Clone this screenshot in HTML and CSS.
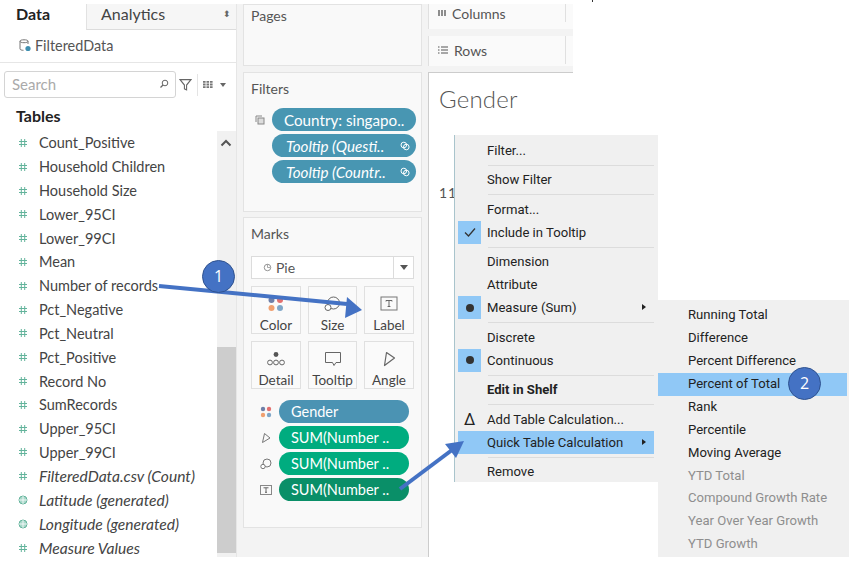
FILE: index.html
```html
<!DOCTYPE html>
<html lang="en">
<head>
<meta charset="utf-8">
<title>Tableau worksheet</title>
<link rel="stylesheet" href="styles.css">
</head>
<body>
<svg class="defs" width="0" height="0" aria-hidden="true">
  <symbol id="hash" viewBox="0 0 10 10"><path d="M3.3 1v8M6.7 1v8M1 3.5h8M1 6.5h8" fill="none" stroke="#62b39b" stroke-width="1"/></symbol>
  <symbol id="globe" viewBox="0 0 10 10"><circle cx="5" cy="5" r="4" fill="#a9d8ca" stroke="#62b39b"/><path d="M5 1v8M1 5h8" stroke="#fff" stroke-width=".8"/></symbol>
  <symbol id="link" viewBox="0 0 10 10"><circle cx="3.8" cy="4" r="2.8" fill="none" stroke="#fff"/><circle cx="6.3" cy="6" r="2.8" fill="none" stroke="#fff"/></symbol>
</svg>
<div class="app">
  <aside class="data">
    <div class="tabs">
      <div class="tab-on">Data</div>
      <div class="tab-off"><span>Analytics</span><span class="updown">⬍</span></div>
    </div>
    <div class="source">
      <svg class="src-icon" viewBox="0 0 12 13"><path d="M9 2.2C9 1.2 7.3.8 5 .8S1 1.2 1 2.2v7.6c0 1 1.6 1.5 3.5 1.5M1 2.2c0 1 1.7 1.5 4 1.5s4-.5 4-1.5V5" fill="none" stroke="#777"/><circle cx="9" cy="9.5" r="2.6" fill="#3f8fb0"/></svg>
      <span>FilteredData</span>
    </div>
    <div class="search-row">
      <div class="search"><span>Search</span><svg viewBox="0 0 10 10"><circle cx="6" cy="4" r="2.8" fill="none" stroke="#666"/><path d="M4 6 1.5 8.5" stroke="#666" stroke-width="1.2"/></svg></div>
      <svg class="funnel" viewBox="0 0 12 12"><path d="M1 1.5h10L7 6.5V11L5 10V6.5z" fill="none" stroke="#666"/></svg>
      <span class="vbar"></span>
      <svg class="grid-ic" viewBox="0 0 10 7"><path d="M0 0h2.6v1.8H0zM3.5 0h2.6v1.8H3.5zM7 0h2.6v1.8H7zM0 2.6h2.6v1.8H0zM3.5 2.6h2.6v1.8H3.5zM7 2.6h2.6v1.8H7zM0 5.2h2.6V7H0zM3.5 5.2h2.6V7H3.5zM7 5.2h2.6V7H7z" fill="#777"/></svg>
      <span class="caret"></span>
    </div>
    <h2 class="tables">Tables</h2>
    <div class="list-wrap">
      <ul class="fields">
        <li><svg class="fi"><use href="#hash"/></svg>Count_Positive</li>
        <li><svg class="fi"><use href="#hash"/></svg>Household Children</li>
        <li><svg class="fi"><use href="#hash"/></svg>Household Size</li>
        <li><svg class="fi"><use href="#hash"/></svg>Lower_95CI</li>
        <li><svg class="fi"><use href="#hash"/></svg>Lower_99CI</li>
        <li><svg class="fi"><use href="#hash"/></svg>Mean</li>
        <li><svg class="fi"><use href="#hash"/></svg>Number of records</li>
        <li><svg class="fi"><use href="#hash"/></svg>Pct_Negative</li>
        <li><svg class="fi"><use href="#hash"/></svg>Pct_Neutral</li>
        <li><svg class="fi"><use href="#hash"/></svg>Pct_Positive</li>
        <li><svg class="fi"><use href="#hash"/></svg>Record No</li>
        <li><svg class="fi"><use href="#hash"/></svg>SumRecords</li>
        <li><svg class="fi"><use href="#hash"/></svg>Upper_95CI</li>
        <li><svg class="fi"><use href="#hash"/></svg>Upper_99CI</li>
        <li class="gen"><svg class="fi"><use href="#hash"/></svg>FilteredData.csv (Count)</li>
        <li class="gen"><svg class="fi"><use href="#globe"/></svg>Latitude (generated)</li>
        <li class="gen"><svg class="fi"><use href="#globe"/></svg>Longitude (generated)</li>
        <li class="gen"><svg class="fi"><use href="#hash"/></svg>Measure Values</li>
      </ul>
      <div class="scroll">
        <svg class="sc-up" viewBox="0 0 12 8"><path d="M1.5 6.5 6 2l4.5 4.5" fill="none" stroke="#555" stroke-width="2"/></svg>
        <div class="thumb"></div>
      </div>
    </div>
  </aside>

  <section class="middle">
    <div class="panel pages"><h3>Pages</h3></div>
    <div class="panel filters">
      <h3>Filters</h3>
      <div class="filter-list">
        <div class="pill-row">
          <svg class="copy" viewBox="0 0 10 10"><path d="M1 7V1h6" fill="none" stroke="#888"/><rect x="3" y="3" width="6" height="6" fill="#ddd" stroke="#888"/></svg>
          <div class="pill blue">Country: singapo..</div>
        </div>
        <div class="pill-row"><div class="pill blue it"><span>Tooltip (Questi..</span><svg class="lk"><use href="#link"/></svg></div></div>
        <div class="pill-row"><div class="pill blue it"><span>Tooltip (Countr..</span><svg class="lk"><use href="#link"/></svg></div></div>
      </div>
    </div>
    <div class="panel marks">
      <h3>Marks</h3>
      <div class="mark-type">
        <div class="mt-main">
          <svg viewBox="0 0 10 10"><circle cx="5" cy="5" r="3.6" fill="none" stroke="#888"/><path d="M5 5V1.5M5 5h3" stroke="#888" stroke-width=".8"/></svg>
          <span>Pie</span>
        </div>
        <div class="mt-drop"><span class="caret dark"></span></div>
      </div>
      <div class="cards">
        <div class="card">
          <svg viewBox="0 0 18 16"><circle cx="4.5" cy="4" r="3" fill="#6f7fa8"/><circle cx="13" cy="4" r="3" fill="#e3706f"/><circle cx="4.5" cy="12" r="3" fill="#f0a070"/><circle cx="13" cy="12" r="3" fill="#7fa6c8"/></svg>
          <span>Color</span>
        </div>
        <div class="card">
          <svg viewBox="0 0 18 16"><circle cx="9.5" cy="7" r="6" fill="none" stroke="#666"/><circle cx="4" cy="11.5" r="3" fill="#fff" stroke="#666"/></svg>
          <span>Size</span>
        </div>
        <div class="card">
          <svg viewBox="0 0 18 16"><rect x="1" y="1" width="16" height="13" fill="none" stroke="#777"/><path d="M6 4.5h6M9 4.5v6M7.6 10.5h2.8M6 4.5v1M12 4.5v1" stroke="#666" fill="none"/></svg>
          <span>Label</span>
        </div>
        <div class="card">
          <svg viewBox="0 0 18 16"><circle cx="9" cy="3.5" r="2.4" fill="#555"/><circle cx="3" cy="11.5" r="2.4" fill="none" stroke="#666"/><circle cx="9" cy="11.5" r="2.4" fill="none" stroke="#666"/><circle cx="15" cy="11.5" r="2.4" fill="none" stroke="#666"/></svg>
          <span>Detail</span>
        </div>
        <div class="card">
          <svg viewBox="0 0 18 16"><path d="M1.5 1.5h15v10h-4.500l-2 3-1.500-3h-7z" fill="none" stroke="#666"/></svg>
          <span>Tooltip</span>
        </div>
        <div class="card">
          <svg viewBox="0 0 18 16"><path d="M6.500 1.500 14.500 7 4.500 14.500z" fill="none" stroke="#666" stroke-width="1.200" stroke-linejoin="round"/></svg>
          <span>Angle</span>
        </div>
      </div>
      <div class="mark-pills">
        <div class="mp">
          <svg viewBox="0 0 12 12"><circle cx="3" cy="3" r="2.200" fill="#6f7fa8"/><circle cx="9" cy="3" r="2.200" fill="#e3706f"/><circle cx="3" cy="9" r="2.200" fill="#f0a070"/><circle cx="9" cy="9" r="2.200" fill="#7fa6c8"/></svg>
          <div class="pill steel">Gender</div>
        </div>
        <div class="mp">
          <svg viewBox="0 0 12 12"><path d="M4.500 1.500 10 6 2.500 10.500z" fill="none" stroke="#777"/></svg>
          <div class="pill green">SUM(Number ..</div>
        </div>
        <div class="mp">
          <svg viewBox="0 0 12 12"><circle cx="7" cy="5" r="4" fill="none" stroke="#777"/><circle cx="3" cy="8.500" r="2.200" fill="#fff" stroke="#777"/></svg>
          <div class="pill green">SUM(Number ..</div>
        </div>
        <div class="mp">
          <svg viewBox="0 0 12 12"><rect x=".5" y="1.500" width="11" height="9" fill="none" stroke="#888"/><path d="M3.500 3.800h5M6 3.800v4.500M5 8.300h2" stroke="#666" fill="none"/></svg>
          <div class="pill green-dark">SUM(Number ..</div>
        </div>
      </div>
    </div>
  </section>

  <section class="work">
    <div class="shelf columns-shelf">
      <svg viewBox="0 0 8 8"><path d="M1 1v6M4 1v6M7 1v6" stroke="#555" stroke-width="1.300"/></svg>
      <span class="shelf-name">Columns</span>
    </div>
    <div class="shelf rows-shelf">
      <svg viewBox="0 0 10 8"><path d="M0 1h1.500M3 1h7M0 4h1.500M3 4h7M0 7h1.500M3 7h7" stroke="#555"/></svg>
      <span class="shelf-name">Rows</span>
    </div>
    <div class="view">
      <h1>Gender</h1>
      <div class="axis">11</div>
    </div>
  </section>
</div>

<div class="tick"></div>

<div class="menu main-menu">
  <div class="mi">Filter...</div>
  <div class="sep"></div>
  <div class="mi">Show Filter</div>
  <div class="sep"></div>
  <div class="mi">Format...</div>
  <div class="mi"><span class="mk"><svg viewBox="0 0 12 10"><path d="M1 5.500 4.500 9 11 1.500" fill="none" stroke="#333" stroke-width="1.300"/></svg></span>Include in Tooltip</div>
  <div class="sep"></div>
  <div class="mi">Dimension</div>
  <div class="mi">Attribute</div>
  <div class="mi"><span class="mk"><i class="dot"></i></span>Measure (Sum)<span class="arr"></span></div>
  <div class="sep"></div>
  <div class="mi">Discrete</div>
  <div class="mi"><span class="mk"><i class="dot"></i></span>Continuous</div>
  <div class="sep"></div>
  <div class="mi bold">Edit in Shelf</div>
  <div class="sep"></div>
  <div class="mi"><span class="delta">Δ</span>Add Table Calculation...</div>
  <div class="mi hot">Quick Table Calculation<span class="arr"></span></div>
  <div class="sep"></div>
  <div class="mi">Remove</div>
</div>

<div class="menu sub-menu">
  <div class="si">Running Total</div>
  <div class="si">Difference</div>
  <div class="si">Percent Difference</div>
  <div class="si hot">Percent of Total</div>
  <div class="si">Rank</div>
  <div class="si">Percentile</div>
  <div class="si">Moving Average</div>
  <div class="si off">YTD Total</div>
  <div class="si off">Compound Growth Rate</div>
  <div class="si off">Year Over Year Growth</div>
  <div class="si off">YTD Growth</div>
</div>

<svg class="arrows" viewBox="0 0 858 563" aria-hidden="true">
  <path d="M159 286 347 304" stroke="#4472c4" stroke-width="4" fill="none"/>
  <path d="M362 310 345 318 347 297z" fill="#4472c4"/>
  <path d="M400 489 452 450" stroke="#4472c4" stroke-width="4" fill="none"/>
  <path d="M464 441 456 458 445 444z" fill="#4472c4"/>
</svg>
<div class="badge b1">1</div>
<div class="badge b2">2</div>
</body>
</html>
```
FILE: styles.css
```css
* { box-sizing: border-box; }
html, body { margin: 0; padding: 0; background: #fff; }
body { width: 858px; height: 563px; overflow: hidden; position: relative; font-family: Lato, "Open Sans", sans-serif; color: #3c3c3c; }
.defs { position: absolute; }
h1, h2, h3, ul { margin: 0; padding: 0; font-weight: normal; }

.app { display: flex; height: 557px; padding-top: 4px; }

/* data pane */
.data { width: 236px; display: flex; flex-direction: column; background: #fff; }
.tabs { display: flex; height: 26px; flex: none; }
.tab-on { width: 86px; padding-left: 16px; font-size: 16px; font-weight: 700; line-height: 20px; color: #222; }
.tab-off { flex: 1; display: flex; justify-content: space-between; padding: 0 5px 0 14px; background: #f6f6f6; border-left: 1px solid #e2e2e2; border-bottom: 1px solid #dcdcdc; font-size: 16px; line-height: 19px; color: #444; }
.updown { font-size: 9px; color: #666; }
.source { height: 33px; flex: none; display: flex; align-items: center; gap: 4px; padding: 0 0 2px 19px; border-bottom: 1px solid #e6e6e6; font-size: 14.4px; color: #555; }
.src-icon { width: 12px; height: 13px; }
.search-row { display: flex; align-items: center; height: 27px; margin-top: 8px; padding-left: 4px; flex: none; }
.search { width: 172px; height: 27px; display: flex; align-items: center; justify-content: space-between; padding: 0 6px 2px 7px; border: 1px solid #d4d4d4; border-radius: 3px; font-size: 15px; color: #aaa; }
.search svg { width: 10px; height: 10px; }
.funnel { width: 13px; height: 13px; margin-left: 3px; }
.vbar { width: 1px; height: 22px; background: #e4e4e4; margin: 0 5px; }
.grid-ic { width: 10px; height: 7px; }
.caret { display: inline-block; width: 0; height: 0; margin-left: 7px; border: 3px solid transparent; border-top: 4px solid #666; border-bottom: 0; }
.caret.dark { margin: 0; border-width: 4px; border-top: 5px solid #555; border-bottom: 0; }
.tables { margin-top: 7px; padding-left: 16px; height: 26px; font-size: 16px; font-weight: 700; line-height: 22px; color: #222; }
.list-wrap { position: relative; flex: 1; display: flex; min-height: 0; }
.fields { list-style: none; width: 217px; padding-top: 0; }
.fields li { height: 23.82px; display: flex; align-items: center; font-size: 14.5px; white-space: nowrap; color: #444; }
.fields li.gen { font-style: italic; font-size: 15.6px; }
.fi { width: 10px; height: 10px; margin: 0 11px 0 18px; flex: none; }
.scroll { width: 19px; background: #f1f1f1; position: relative; }
.sc-up { position: absolute; left: 3px; top: 8px; width: 12px; height: 8px; }
.thumb { position: absolute; left: 0; right: 0; top: 216px; bottom: 4px; background: #cdcdcd; }

/* middle column */
.middle { width: 192px; background: #f3f3f3; padding: 0 6px; display: flex; flex-direction: column; gap: 6px; border-left: 1px solid #e6e6e6; }
.panel { background: #f9f9f9; border: 1px solid #e3e3e3; padding: 0 7px; }
.panel h3 { font-size: 14px; color: #555; line-height: 18px; }
.pages { height: 62px; padding-top: 2px; }
.filters { height: 140px; padding-top: 7px; }
.filter-list { margin-top: 10px; display: flex; flex-direction: column; gap: 3px; }
.pill-row { display: flex; justify-content: flex-end; align-items: center; margin-right: -2px; }
.copy { width: 10px; height: 10px; margin-right: 7px; }
.pill { height: 23px; border-radius: 12px; color: #fff; font-size: 14.5px; line-height: 24px; padding-left: 12px; white-space: nowrap; }
.blue { width: 144px; background: #4896b2; font-size: 15.2px; }
.blue.it { font-style: italic; padding-left: 14px; display: flex; justify-content: space-between; align-items: center; padding-right: 6px; }
.lk { width: 10px; height: 10px; }
.marks { flex: none; height: 311px; margin-top: -1px; padding-top: 7px; }
.mark-type { display: flex; height: 23px; margin-top: 13px; background: #fff; border: 1px solid #dcdcdc; }
.mt-main { flex: 1; display: flex; align-items: center; gap: 4px; padding-left: 11px; font-size: 14px; color: #555; }
.mt-main svg { width: 9px; height: 9px; }
.mt-drop { width: 20px; border-left: 1px solid #dcdcdc; display: flex; align-items: center; justify-content: center; }
.cards { display: grid; grid-template-columns: 50px 49px 50px; grid-auto-rows: 48px; column-gap: 7px; row-gap: 7px; margin-top: 7px; }
.card { border: 1px solid #e0e0e0; background: #fafafa; display: flex; flex-direction: column; align-items: center; justify-content: flex-end; font-size: 13.5px; line-height: 16px; color: #444; }
.card svg { width: 18px; height: 16px; margin-bottom: 5px; }
.mark-pills { margin-top: 11px; display: flex; flex-direction: column; gap: 3px; }
.mp { display: flex; align-items: center; justify-content: flex-end; gap: 7px; margin-right: 5px; }
.mp svg { width: 12px; height: 12px; }
.mp .pill { width: 130px; }
.steel { background: #4b93b3; }
.green { background: #00ac7f; }
.green-dark { background: #0a8f68; }

/* work area */
.work { width: 145px; display: flex; flex-direction: column; background: #f3f3f3; }
.shelf { display: flex; align-items: center; gap: 6px; background: #fafafa; padding-left: 9px; font-size: 14px; color: #555; border-left: 1px solid #e0e0e0; position: relative; }
.shelf svg { width: 8px; height: 8px; flex: none; }
.rows-shelf svg { width: 10px; }
.shelf-name { flex: 1; height: 100%; display: flex; align-items: center; border-right: 1px solid #e0e0e0; margin-right: 7px; }
.columns-shelf { height: 25px; padding-bottom: 7px; }
.rows-shelf { height: 30px; margin-top: 7px; padding-bottom: 2px; }
.view { flex: 1; margin-top: 6px; background: #fff; border-top: 1px solid #ccc; border-left: 1px solid #ccc; padding: 13px 0 0 10px; }
.view h1 { font-size: 24px; font-weight: 300; line-height: 26px; color: #555; letter-spacing: .2px; }
.axis { margin-top: 72px; font-size: 14px; color: #555; letter-spacing: 1px; }

.tick { position: absolute; left: 592px; top: 0; width: 1px; height: 2px; background: #333; }

/* context menus */
.menu { position: absolute; background: #f0f0f0; font-family: Roboto, "Open Sans", sans-serif; font-size: 13.1px; color: #222; }
.main-menu { left: 454px; top: 135px; width: 204px; height: 347px; padding: 3.5px 4px 0 3px; border-left: 1px solid #a9c4cc; }
.mi { height: 23px; line-height: 23px; padding-left: 29px; position: relative; white-space: nowrap; }
.sep { height: 1px; margin: 3px 0 2.5px 30px; background: #dcdcdc; }
.mk { position: absolute; left: 0; top: 0; width: 23px; height: 23px; background: #90c8f6; display: flex; align-items: center; justify-content: center; }
.mk svg { width: 12px; height: 10px; }
.dot { width: 8px; height: 8px; border-radius: 50%; background: #333; }
.delta { position: absolute; left: 6px; top: 0; font-size: 16px; }
.arr { position: absolute; right: 8px; top: 8px; border-left: 4px solid #222; border-top: 3px solid transparent; border-bottom: 3px solid transparent; }
.bold { font-weight: 700; }
.hot { background: #90c8f6; }
.sub-menu { left: 658px; top: 300px; width: 191px; height: 257px; padding-top: 4.3px; }
.si { height: 22.9px; line-height: 22.9px; padding-left: 30px; margin-right: 2px; white-space: nowrap; }
.off { color: #8e8e8e; }

/* annotations */
.arrows { position: absolute; left: 0; top: 0; width: 858px; height: 563px; pointer-events: none; }
.badge { position: absolute; width: 33px; height: 33px; border-radius: 50%; background: #4472c4; border: 1.500px solid #2f528f; color: #fff; font-family: "Open Sans", sans-serif; font-size: 16px; line-height: 31px; text-align: center; }
.b1 { left: 202px; top: 260px; }
.b2 { left: 788px; top: 367px; }
```
